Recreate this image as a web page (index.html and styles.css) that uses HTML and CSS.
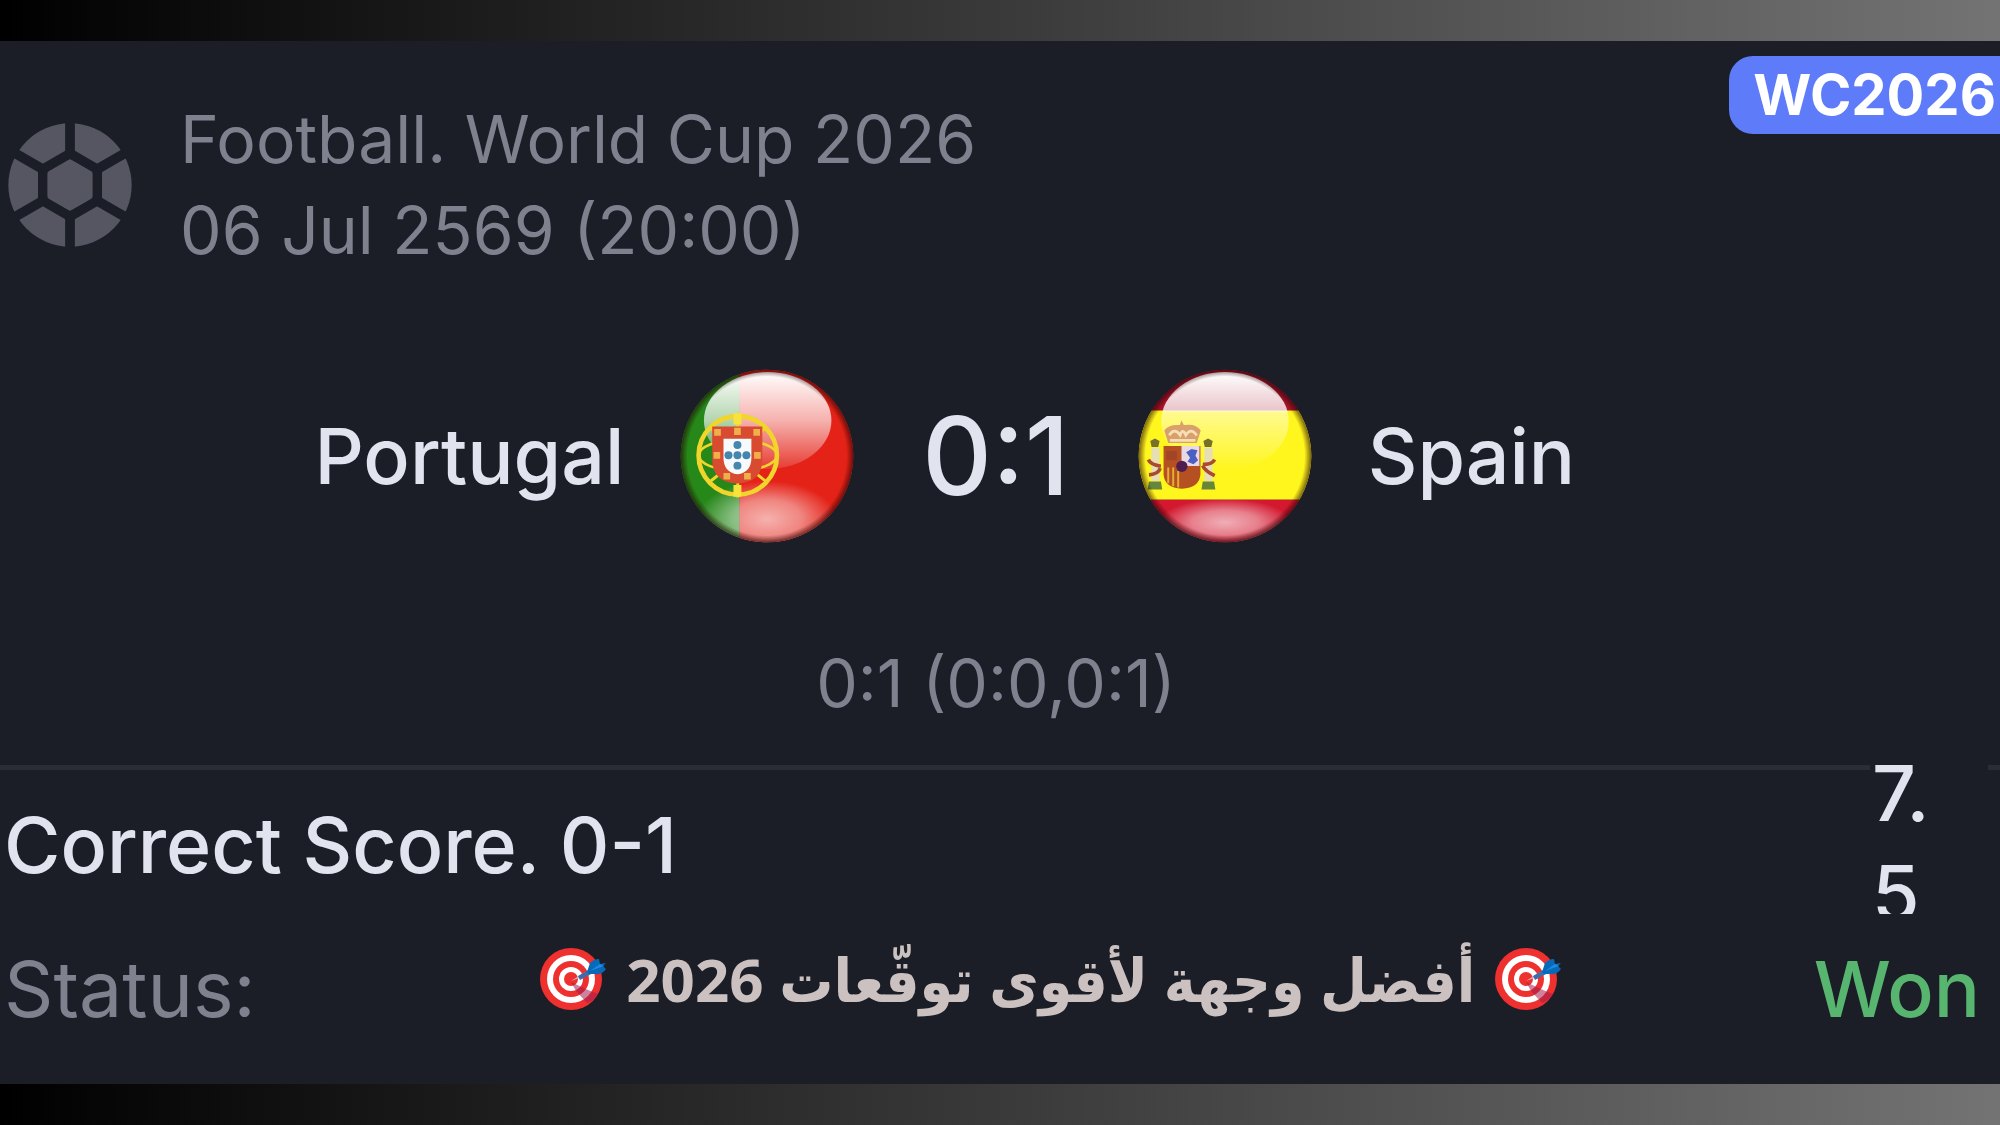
FILE: index.html
```html
<!DOCTYPE html>
<html lang="en">
<head>
    <meta charset="UTF-8">
    <meta name="viewport" content="width=device-width, initial-scale=1.0">
    <title>Portugal - Spain</title>
    <link rel="stylesheet" href="styles.css">
</head>
<body>
    <main class="card">
        <header class="event">
            <svg class="ball" viewBox="0 0 370 370" aria-hidden="true">
                <circle cx="185" cy="185" r="184" fill="#555662"/>
                <g fill="none" stroke="#1b1e26" stroke-width="29">
                    <path d="M185 91 L266 138 V232 L185 279 L104 232 V138 Z"/>
                    <path d="M185 91 V-10 M185 279 V380 M266 138 L380 72 M266 232 L380 298 M104 138 L-10 72 M104 232 L-10 298"/>
                </g>
                <path d="M185 121 L241 153 V217 L185 249 L129 217 V153 Z" fill="#555662" stroke="#555662" stroke-width="22" stroke-linejoin="round"/>
            </svg>
            <div class="event-text">
                <p>Football. World Cup 2026</p>
                <p>06 Jul 2569 (20:00)</p>
            </div>
            <span class="badge">WC2026</span>
        </header>

        <section class="match">
            <div class="team home">
                <span>Portugal</span>
                <svg class="flag" viewBox="61 63 524 524" role="img" aria-label="Flag of Portugal">
                    <defs>
                        <clipPath id="pt-clip"><circle cx="323" cy="325" r="260"/></clipPath>
                        <linearGradient id="pt-gloss" x1="0" y1="0" x2="0" y2="1">
                            <stop offset="0" stop-color="#fff"/>
                            <stop offset=".5" stop-color="#fff" stop-opacity=".65"/>
                            <stop offset="1" stop-color="#fff" stop-opacity=".12"/>
                        </linearGradient>
                        <radialGradient id="glow">
                            <stop offset="0" stop-color="#fff" stop-opacity=".65"/>
                            <stop offset=".5" stop-color="#fff" stop-opacity=".45"/>
                            <stop offset="1" stop-color="#fff" stop-opacity="0"/>
                        </radialGradient>
                        <radialGradient id="rim">
                            <stop offset=".92" stop-color="#200" stop-opacity="0"/>
                            <stop offset="1" stop-color="#200" stop-opacity=".6"/>
                        </radialGradient>
                    </defs>
                    <g clip-path="url(#pt-clip)">
                        <path d="M60 60 H240 V590 H60 Z" fill="#27881a"/>
                        <path d="M240 60 H590 V590 H240 Z" fill="#e42218"/>
                        <ellipse cx="323" cy="515" rx="210" ry="115" fill="url(#glow)"/>
                        <ellipse cx="325" cy="218" rx="192" ry="146" fill="url(#pt-gloss)"/>
                        <g fill="none" stroke="#f1d52b">
                            <circle cx="235" cy="323" r="118" stroke-width="14"/>
                            <ellipse cx="235" cy="323" rx="118" ry="46" stroke-width="8"/>
                            <path d="M150 235 Q235 340 325 405 M320 235 Q235 340 148 405 M235 195 V250 M235 395 V450" stroke-width="9"/>
                        </g>
                        <path d="M222 196 h24 v34 h-24 z M222 412 h24 v36 h-24 z" fill="#f8e33c"/>
                        <path d="M158 236 H309 V335 Q309 405 234 408 Q158 405 158 335 Z" fill="#d84b31"/>
                        <g fill="#efb04b">
                            <path d="M164 244 h20 v20 h-20 z M224 240 h20 v22 h-20 z M282 244 h20 v20 h-20 z M162 313 h20 v20 h-20 z M284 313 h20 v20 h-20 z M192 376 h20 v20 h-20 z M254 376 h20 v20 h-20 z"/>
                        </g>
                        <path d="M192 273 H276 V330 Q276 374 234 380 Q192 374 192 330 Z" fill="#f7fafc"/>
                        <g fill="#4486ad">
                            <circle cx="234" cy="292" r="12"/>
                            <circle cx="207" cy="323" r="12"/>
                            <circle cx="234" cy="323" r="12"/>
                            <circle cx="261" cy="323" r="12"/>
                            <circle cx="234" cy="354" r="12"/>
                        </g>
                        <circle cx="323" cy="325" r="260" fill="url(#rim)"/>
                    </g>
                </svg>
            </div>
            <strong class="score">0:1</strong>
            <div class="team">
                <svg class="flag" viewBox="81 63 524 524" role="img" aria-label="Flag of Spain">
                    <defs>
                        <clipPath id="es-clip"><circle cx="343" cy="325" r="260"/></clipPath>
                        <linearGradient id="es-gloss" x1="0" y1="0" x2="0" y2="1">
                            <stop offset="0" stop-color="#fff"/>
                            <stop offset=".4" stop-color="#fff" stop-opacity=".75"/>
                            <stop offset=".41" stop-color="#fff" stop-opacity=".5"/>
                            <stop offset="1" stop-color="#fff" stop-opacity="0"/>
                        </linearGradient>
                    </defs>
                    <g clip-path="url(#es-clip)">
                        <path d="M80 60 H610 V190 H80 Z" fill="#a8132b"/>
                        <path d="M80 188 H610 V457 H80 Z" fill="#fff61d"/>
                        <path d="M80 457 H610 V590 H80 Z" fill="#d3182f"/>
                        <ellipse cx="343" cy="525" rx="200" ry="72" fill="url(#glow)"/>
                        <ellipse cx="343" cy="220" rx="192" ry="148" fill="url(#es-gloss)"/>
                        <!-- pillars -->
                        <g>
                            <path d="M121 300 h25 v100 h-25 z M281 300 h25 v100 h-25 z" fill="#e6dfb4"/>
                            <path d="M114 402 h36 l4 24 h-44 z M276 402 h34 l4 24 h-42 z" fill="#67863a"/>
                            <path d="M118 280 l14 -8 14 8 -4 18 h-20 z M278 280 l14 -8 14 8 -4 18 h-20 z" fill="#77702d"/>
                            <path d="M112 336 Q120 352 150 356 M114 382 Q142 380 148 362 M312 336 Q302 352 276 350 M312 384 Q282 370 276 354" fill="none" stroke="#aa4a32" stroke-width="11"/>
                        </g>
                        <!-- crown -->
                        <path d="M172 286 L160 248 Q175 228 207 232 L212 218 L219 232 Q255 226 270 248 L258 286 Z" fill="#d9a06b"/>
                        <path d="M175 263 Q190 238 208 262 Q215 240 225 262 Q240 238 258 263 M177 278 H254" fill="none" stroke="#f6dfb8" stroke-width="8"/>
                        <!-- shield -->
                        <path d="M158 295 H269 V380 Q267 420 213 424 Q160 420 158 380 Z" fill="#b45022"/>
                        <path d="M212 295 H266 V355 H212 Z" fill="#e8d9e4"/>
                        <path d="M226 314 l16 -10 18 4 -6 16 8 14 -14 12 -18 -8 8 -12 z" fill="#4b60c0"/>
                        <path d="M172 360 V407 M187 360 V416 M202 370 V420" stroke="#e4ad35" stroke-width="6"/>
                        <path d="M166 310 h32 v28 h-32 z" fill="#a34327"/>
                        <circle cx="213" cy="356" r="17" fill="#4e1e50"/>
                        <circle cx="343" cy="325" r="260" fill="url(#rim)"/>
                    </g>
                </svg>
                <span>Spain</span>
            </div>
        </section>
        <p class="periods">0:1 (0:0,0:1)</p>

        <section class="bet">
            <span class="market">Correct Score. 0-1</span>
            <span class="odds">7.<br>5</span>
        </section>

        <footer class="status">
            <span class="status-label">Status:</span>
            <p class="caption" dir="rtl" lang="ar">
                <svg class="target" viewBox="0 0 66 62" aria-hidden="true">
                    <circle cx="31" cy="31" r="31" fill="#ee302f"/>
                    <circle cx="31" cy="31" r="24" fill="#fff"/>
                    <circle cx="31" cy="31" r="18" fill="#ee302f"/>
                    <circle cx="31" cy="31" r="12" fill="#fff"/>
                    <circle cx="31" cy="31" r="7" fill="#ee302f"/>
                    <path d="M31 34 L48 42 L58 46 Q54 53 47 55 L36 43 Z" fill="#a51e4d" opacity=".55"/>
                    <path d="M31 33 L45 24 L48 27 Z" fill="#c9b6c4"/>
                    <path d="M38 28 L50 21 L53 25 L40 32 Z" fill="#3f6ca9"/>
                    <path d="M47 24 L50 15 Q54 11 59 11 L60 16 L66 15 L63 18 L66 21 Q62 27 56 26 L49 26 Z" fill="#0869b8"/>
                    <path d="M50 23 L60 16 L64 18 Z" fill="#1a8be0"/>
                </svg>
                <span>أفضل وجهة لأقوى توقّعات 2026</span>
                <svg class="target" viewBox="0 0 66 62" aria-hidden="true">
                    <circle cx="31" cy="31" r="31" fill="#ee302f"/>
                    <circle cx="31" cy="31" r="24" fill="#fff"/>
                    <circle cx="31" cy="31" r="18" fill="#ee302f"/>
                    <circle cx="31" cy="31" r="12" fill="#fff"/>
                    <circle cx="31" cy="31" r="7" fill="#ee302f"/>
                    <path d="M31 34 L48 42 L58 46 Q54 53 47 55 L36 43 Z" fill="#a51e4d" opacity=".55"/>
                    <path d="M31 33 L45 24 L48 27 Z" fill="#c9b6c4"/>
                    <path d="M38 28 L50 21 L53 25 L40 32 Z" fill="#3f6ca9"/>
                    <path d="M47 24 L50 15 Q54 11 59 11 L60 16 L66 15 L63 18 L66 21 Q62 27 56 26 L49 26 Z" fill="#0869b8"/>
                    <path d="M50 23 L60 16 L64 18 Z" fill="#1a8be0"/>
                </svg>
            </p>
            <span class="won">Won</span>
        </footer>
    </main>
</body>
</html>
```

FILE: styles.css
```css
* {
    box-sizing: border-box;
}
body {
    margin: 0;
    min-height: 100vh;
    padding: 41px 0;
    display: flex;
    background: linear-gradient(to right, #000000, #737373);
    font-family: Inter, "Liberation Sans", sans-serif;
    font-size: 77px;
    line-height: 100px;
    color: #e1e3ee;
}
p {
    margin: 0;
}
.card {
    flex: 1;
    min-width: 0;
    background: #1b1e26;
    overflow: hidden;
}
.event {
    display: flex;
    align-items: flex-start;
    padding: 15px 0 0 8px;
}
.ball {
    width: 124px;
    height: 124px;
    margin-top: 67px;
    flex: none;
}
.event-text {
    margin: 38px 0 0 48px;
    font-size: 66px;
    line-height: 91px;
    color: #7f818f;
}
.badge {
    margin-left: auto;
    margin-right: -24px;
    padding: 0 28px 0 24px;
    border-radius: 24px;
    background: #5e7cfa;
    color: #ffffff;
    font-size: 56px;
    font-weight: 700;
    line-height: 78px;
}
.match {
    display: grid;
    grid-template-columns: 1fr auto 1fr;
    align-items: center;
    column-gap: 68px;
    padding: 93px 16px 0 8px;
}
.team {
    display: flex;
    align-items: center;
    gap: 56px;
    font-weight: 500;
}
.home {
    justify-content: flex-end;
}
.flag {
    width: 174px;
    height: 174px;
    flex: none;
}
.score {
    font-size: 108px;
    font-weight: 500;
}
.periods {
    margin-top: 90px;
    padding: 0 16px 0 8px;
    text-align: center;
    font-size: 66px;
    color: #7f818f;
}
.bet {
    display: flex;
    justify-content: space-between;
    align-items: flex-start;
    height: 149px;
    margin-top: 32px;
    border-top: 5px solid #2b2d36;
    padding-left: 4px;
    font-weight: 500;
}
.market {
    margin-top: 25px;
}
/* the odds column is too narrow for its value and hides the line behind it */
.odds {
    width: 118px;
    height: 171px;
    margin-top: -27px;
    margin-right: 12px;
    padding-left: 2px;
    background: #1b1e26;
    overflow: hidden;
}
.status {
    display: flex;
    justify-content: space-between;
    align-items: flex-start;
    padding: 25px 20px 0 4px;
}
.status-label {
    color: #7f818f;
}
.caption {
    display: flex;
    align-items: center;
    gap: 20px;
    padding-left: 32px;
    font-family: "Noto Sans", "DejaVu Sans Condensed", "DejaVu Sans", sans-serif;
    font-size: 60px;
    font-weight: 700;
    line-height: 80px;
    color: #cbc1c0;
}
.target {
    width: 66px;
    height: 62px;
    flex: none;
}
.won {
    font-weight: 500;
    color: #58b56f;
}
```
